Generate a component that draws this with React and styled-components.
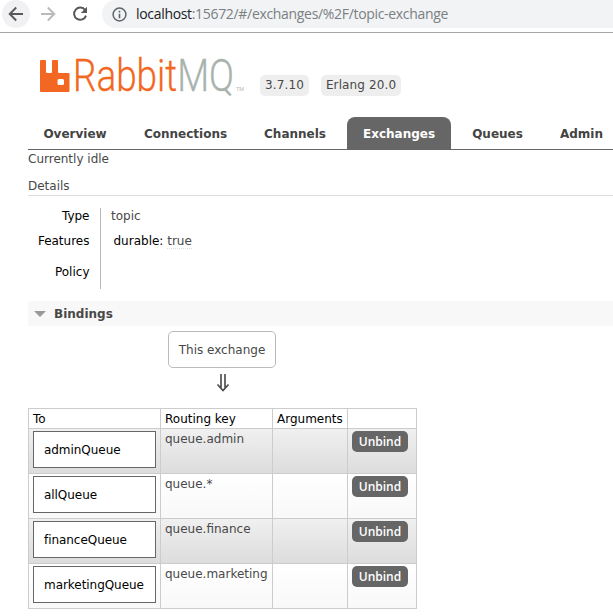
import React from 'react';
import styled, { createGlobalStyle } from 'styled-components';

const GlobalStyle = createGlobalStyle`
    body {
        margin: 0;
        background: #fff;
        color: #484848;
        font: 12px/17px 'DejaVu Sans', Verdana, sans-serif;
        overflow: hidden;
    }

    * {
        box-sizing: border-box;
    }
`;

const BrowserBar = styled.div`
    display: flex;
    align-items: flex-start;
    height: 33px;
    border-bottom: 1px solid #a5a6a7;
`;

const NavButton = styled.span`
    display: grid;
    place-items: center;
    flex: none;
    width: 28px;
    height: 28px;
    margin-left: ${props => props.$offset}px;
    border-radius: 50%;
    background: ${props => (props.$active ? '#f1f1f3' : 'none')};
    color: ${props => (props.$muted ? '#bababa' : '#56585b')};
`;

const Address = styled.div`
    display: flex;
    align-items: center;
    flex: 1;
    height: 28px;
    margin-left: 8px;
    padding-left: 10px;
    border-radius: 14px 0 0 14px;
    background: #f1f3f4;
    color: #7b7f83;
    font: 14px/28px 'Open Sans', 'Segoe UI', sans-serif;
    letter-spacing: -0.32px;
    white-space: nowrap;

    svg {
        flex: none;
        margin-right: 9px;
    }
`;

const Host = styled.span`
    color: #202124;
`;

const Header = styled.header`
    display: flex;
    height: 84px;
    padding-left: 36px;
`;

const Version = styled.span`
    height: 21px;
    margin: 42px 12px 0 0;
    padding: 0 5px;
    border-radius: 5px;
    background: #eee;
    letter-spacing: 0.12px;
    line-height: 21px;
`;

const Tabs = styled.nav`
    display: flex;
    height: 33px;
    margin-left: 28px;
    border-bottom: 1px solid #666;
`;

const Tab = styled.a`
    flex: none;
    width: ${props => props.$width}px;
    height: 32px;
    margin-right: 6px;
    border-radius: 8px 8px 0 0;
    background: ${props => (props.$selected ? '#666' : 'none')};
    color: ${props => (props.$selected ? '#fff' : '#444')};
    font-weight: bold;
    line-height: 34px;
    text-align: center;
    white-space: nowrap;
`;

const Main = styled.main`
    padding-left: 28px;
`;

const Status = styled.div`
    height: 26px;
    padding-top: 1px;
`;

const DetailsTitle = styled.div`
    height: 20px;
    line-height: 21px;
    border-bottom: 1px solid #ddd;
`;

const Facts = styled.div`
    display: grid;
    grid-template-columns: 73px 1fr;
    grid-template-rows: 22px 29px 30px;
    margin-top: 12px;
`;

const Label = styled.div`
    padding: ${props => props.$top || 0}px 10.5px 0 0;
    border-right: 1px solid #bbb;
    color: #000;
    line-height: 16px;
    text-align: right;
`;

const Fact = styled.div`
    padding: ${props => props.$top || 0}px 0 0 ${props => props.$left || 10}px;
    line-height: 16px;
`;

const Key = styled.span`
    color: #000;
`;

const Value = styled.span`
    border-bottom: 1px dotted #ddd;
`;

const SectionTitle = styled.h2`
    display: flex;
    align-items: center;
    height: 25px;
    margin: 12px 0 5px;
    padding-left: 6px;
    background: #f8f8f8;
    font-size: 12px;
    line-height: 18px;
`;

const Triangle = styled.span`
    margin-right: 8px;
    border: solid transparent;
    border-width: 6px 6px 0;
    border-top-color: #999;
`;

const Source = styled.div`
    display: flex;
    flex-direction: column;
    align-items: center;
    width: 388px;
    height: 77px;
`;

const Exchange = styled.span`
    width: 108px;
    height: 37px;
    border: 1px solid #bbb;
    border-radius: 5px;
    line-height: 36px;
    text-align: center;
`;

const Arrow = styled.svg`
    margin: 6px 0 0 1px;
`;

const Table = styled.table`
    width: 389px;
    border-collapse: collapse;
    table-layout: fixed;
`;

const HeadCell = styled.th`
    width: ${props => props.$width}px;
    height: 20px;
    padding: 1px 4px 0;
    border: 1px solid #ccc;
    color: #000;
    font-weight: normal;
    line-height: 18px;
    text-align: left;
    white-space: nowrap;
`;

const Row = styled.tr`
    height: 45px;
    background: ${props =>
        props.$shaded ? 'linear-gradient(#f0f0f0, #dcdcdc)' : 'linear-gradient(#fff, #f8f8f8)'};
`;

const Cell = styled.td`
    padding: 2px 4px;
    border: 1px solid #ccc;
    line-height: 16px;
    vertical-align: top;
    white-space: nowrap;
`;

const Queue = styled.div`
    width: 123px;
    height: 37px;
    padding-left: 10px;
    border: 1px solid #666;
    background: #fff;
    color: #000;
    letter-spacing: -0.05px;
    line-height: 36px;
`;

const Unbind = styled.button`
    display: block;
    width: 56px;
    height: 21px;
    padding: 0;
    border: 0;
    border-radius: 5px;
    background: #666;
    color: #fff;
    font: 600 12px/20px 'Open Sans', 'Segoe UI', sans-serif;
`;

const tabs = [
    { name: 'Overview', width: 94 },
    { name: 'Connections', width: 115 },
    { name: 'Channels', width: 92 },
    { name: 'Exchanges', width: 104, selected: true },
    { name: 'Queues', width: 81 },
    { name: 'Admin', width: 75 }
];

const bindings = [
    { queue: 'adminQueue', key: 'queue.admin' },
    { queue: 'allQueue', key: 'queue.*' },
    { queue: 'financeQueue', key: 'queue.finance' },
    { queue: 'marketingQueue', key: 'queue.marketing' }
];

function ArrowIcon({ flip }) {
    return (
        <svg width="16" height="16" viewBox="0 0 16 16" fill="none" stroke="currentColor" strokeWidth="1.9">
            <path d={flip ? 'M1 8H14M7.8 1.5L14.3 8L7.8 14.5' : 'M15 8H2M8.2 1.5L1.7 8L8.2 14.5'} />
        </svg>
    );
}

function ReloadIcon() {
    return (
        <svg width="16" height="16" viewBox="0 0 16 16">
            <path
                d="M13.2 4.2A6.1 6.1 0 1 0 14 9.6"
                fill="none"
                stroke="currentColor"
                strokeWidth="2"
            />
            <path d="M15 .8V7H8.8Z" fill="currentColor" />
        </svg>
    );
}

function InfoIcon() {
    return (
        <svg width="15" height="15" viewBox="0 0 15 15">
            <circle cx="7.5" cy="7.5" r="6.4" fill="none" stroke="#5f6368" strokeWidth="1.5" />
            <path d="M6.7 3.8h1.6v1.6H6.7zM6.7 6.7h1.6v4.6H6.7z" fill="#5f6368" />
        </svg>
    );
}

function Logo() {
    return (
        <svg width="224" height="84" viewBox="36 33 224 84">
            <path
                d="M41 60h4q1 0 1 1v11q0 1 1 1h4q1 0 1-1V61q0-1 1-1h4q1 0 1 1v11q0 1 1 1h9.500q1 0 1 1v17q0 1-1 1H41q-1 0-1-1V61q0-1 1-1zM59 79q-1.500 0-1.500 1.500v3q0 1.500 1.500 1.500h3.500q1.500 0 1.500-1.500v-3q0-1.500-1.500-1.500z"
                fill="#f26722"
                fillRule="evenodd"
            />
            <text
                x="73"
                y="91"
                fill="#f26722"
                stroke="#f26722"
                strokeWidth="0.3"
                fontFamily="Roboto, sans-serif"
                fontWeight="300"
                fontSize="44.5"
                textLength="161"
                lengthAdjust="spacingAndGlyphs"
            >
                Rabbit
                <tspan fill="#a9b2ac" stroke="#a9b2ac">MQ</tspan>
            </text>
            <text x="236" y="91" fill="#b5bbb7" fontFamily="Roboto, sans-serif" fontSize="5.5">
                TM
            </text>
        </svg>
    );
}

function Browser() {
    return (
        <BrowserBar>
            <NavButton $active $offset={2}>
                <ArrowIcon />
            </NavButton>
            <NavButton $muted $offset={4}>
                <ArrowIcon flip />
            </NavButton>
            <NavButton $offset={4}>
                <ReloadIcon />
            </NavButton>
            <Address>
                <InfoIcon />
                <Host>localhost</Host>:15672/#/exchanges/%2F/topic-exchange
            </Address>
        </BrowserBar>
    );
}

function Bindings() {
    return (
        <Table>
            <thead>
                <tr>
                    <HeadCell $width={132}>To</HeadCell>
                    <HeadCell $width={112}>Routing key</HeadCell>
                    <HeadCell $width={75}>Arguments</HeadCell>
                    <HeadCell $width={69} />
                </tr>
            </thead>
            <tbody>
                {bindings.map((binding, i) => (
                    <Row key={binding.queue} $shaded={i % 2 === 0}>
                        <Cell>
                            <Queue>{binding.queue}</Queue>
                        </Cell>
                        <Cell>{binding.key}</Cell>
                        <Cell />
                        <Cell>
                            <Unbind>Unbind</Unbind>
                        </Cell>
                    </Row>
                ))}
            </tbody>
        </Table>
    );
}

export default function App() {
    return (
        <>
            <GlobalStyle />
            <Browser />
            <Header>
                <Logo />
                <Version>3.7.10</Version>
                <Version>Erlang 20.0</Version>
            </Header>
            <Tabs>
                {tabs.map(tab => (
                    <Tab key={tab.name} $width={tab.width} $selected={tab.selected}>
                        {tab.name}
                    </Tab>
                ))}
            </Tabs>
            <Main>
                <Status>Currently idle</Status>
                <DetailsTitle>Details</DetailsTitle>
                <Facts>
                    <Label>Type</Label>
                    <Fact>topic</Fact>
                    <Label $top={3}>Features</Label>
                    <Fact $top={3} $left={12.5}>
                        <Key>durable:</Key> <Value>true</Value>
                    </Fact>
                    <Label $top={5}>Policy</Label>
                    <Fact />
                </Facts>
                <SectionTitle>
                    <Triangle />
                    Bindings
                </SectionTitle>
                <Source>
                    <Exchange>This exchange</Exchange>
                    <Arrow width="14" height="18" viewBox="0 0 14 18" fill="none" stroke="#484848" strokeWidth="1.6">
                        <path d="M5 0V13.500M9 0V13.500M1.500 10.500L7 16.500L12.500 10.500" />
                    </Arrow>
                </Source>
                <Bindings />
            </Main>
        </>
    );
}
